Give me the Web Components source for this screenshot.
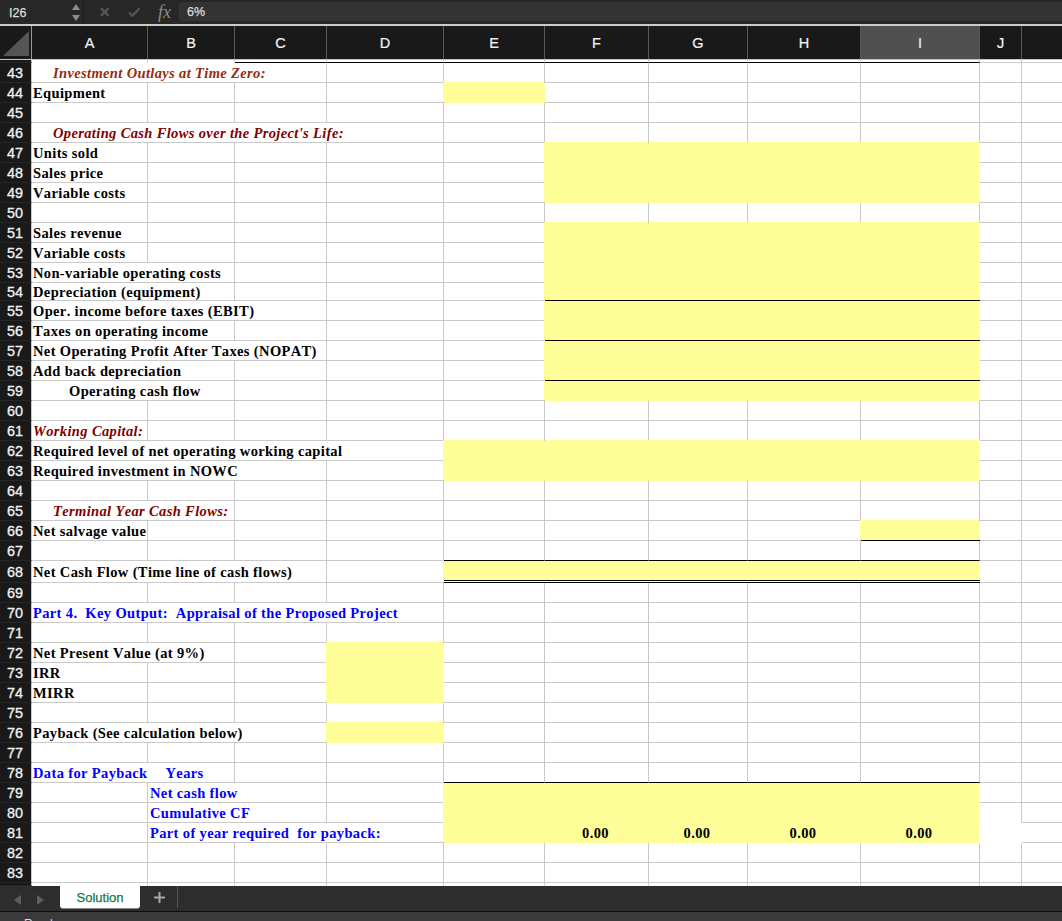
<!DOCTYPE html>
<html>
<head>
<meta charset="utf-8">
<title>Solution</title>
<style>
  html, body { margin: 0; padding: 0; background: #fff; }
  body { width: 1062px; height: 921px; overflow: hidden; font-family: "Liberation Sans", Arial, sans-serif; }
</style>
</head>
<body>
<xl-formula-bar cell="I26" value="6%"></xl-formula-bar>
<xl-sheet></xl-sheet>
<xl-tab-bar active="Solution"></xl-tab-bar>
<xl-status-bar>Ready</xl-status-bar>

<script>
// Formula bar
class XlFormulaBar extends HTMLElement {
  constructor() {
    super();
    this.attachShadow({ mode: 'open' });
  }

  connectedCallback() {
    this.shadowRoot.innerHTML = `
      <style>
        :host {
          display: flex;
          align-items: center;
          height: 26px;
          box-sizing: border-box;
          background: #272727;
          color: #ddd;
          font: 12.5px "Liberation Sans", Arial, sans-serif;
          border-bottom: 2px solid #cbcbcb;
        }
        .name { width: 60px; padding: 1px 0 0 9px; box-sizing: border-box; -webkit-text-stroke: .25px #ddd; }
        .stepper { width: 24px; height: 100%; box-sizing: border-box; border-right: 1px solid #1c1c1c; display: flex; flex-direction: column; justify-content: center; gap: 5px; padding-left: 12px; }
        .stepper svg { display: block; }
        .actions { display: flex; align-items: center; width: 95px; height: 100%; }
        .actions svg { display: block; }
        .fx { font: italic 18px "Liberation Serif", serif; color: #8b8b8b; margin-left: 18px; width: 22px; }
        .input { flex: 1; align-self: stretch; margin: 2px 0 3px; background: #333; border-radius: 3px 0 0 3px; padding-left: 8px; line-height: 20px; -webkit-text-stroke: .25px #ddd; }
      </style>
      <div class="name">${this.getAttribute('cell')}</div>
      <div class="stepper">
        <svg width="8" height="6" viewBox="0 0 8 6"><path d="M4 0 8 6H0z" fill="#8c8c8c"/></svg>
        <svg width="8" height="6" viewBox="0 0 8 6"><path d="M0 0H8L4 6z" fill="#8c8c8c"/></svg>
      </div>
      <div class="actions">
        <svg style="margin-left:16px" width="10" height="10" viewBox="0 0 10 10"><path d="M1 1 9 9M9 1 1 9" stroke="#555" stroke-width="2.4" fill="none"/></svg>
        <svg style="margin-left:18px" width="13" height="10" viewBox="0 0 13 10"><path d="M1 5.5 4.6 9 12 1" stroke="#555" stroke-width="2.4" fill="none"/></svg>
        <span class="fx">fx</span>
      </div>
      <div class="input">${this.getAttribute('value')}</div>
    `;
  }
}

// Worksheet grid
const COLS = [['A', 116], ['B', 87], ['C', 92], ['D', 117], ['E', 101], ['F', 104], ['G', 99], ['H', 113], ['I', 119], ['J', 42], ['K', 40]];
const LETTERS = COLS.map(c => c[0]);

// row: [column, span, text, style class, indent]
const TEXTS = {
  43: ['A', 3, 'Investment Outlays at Time Zero:', 'rust', 20],
  44: ['A', 1, 'Equipment'],
  46: ['A', 4, "Operating Cash Flows over the Project's Life:", 'maroon', 20],
  47: ['A', 1, 'Units sold'],
  48: ['A', 1, 'Sales price'],
  49: ['A', 1, 'Variable costs'],
  51: ['A', 1, 'Sales revenue'],
  52: ['A', 1, 'Variable costs'],
  53: ['A', 2, 'Non-variable operating costs'],
  54: ['A', 2, 'Depreciation (equipment)'],
  55: ['A', 3, 'Oper. income before taxes (EBIT)'],
  56: ['A', 2, 'Taxes on operating income'],
  57: ['A', 3, 'Net Operating Profit After Taxes (NOPAT)'],
  58: ['A', 2, 'Add back depreciation'],
  59: ['A', 2, 'Operating cash flow', '', 36],
  61: ['A', 1, 'Working Capital:', 'maroon'],
  62: ['A', 4, 'Required level of net operating working capital'],
  63: ['A', 3, 'Required investment in NOWC'],
  65: ['A', 2, 'Terminal Year Cash Flows:', 'maroon', 20],
  66: ['A', 1, 'Net salvage value'],
  68: ['A', 3, 'Net Cash Flow (Time line of cash flows)'],
  70: ['A', 4, 'Part 4.  Key Output:  Appraisal of the Proposed Project', 'blue'],
  72: ['A', 2, 'Net Present Value (at 9%)'],
  73: ['A', 1, 'IRR'],
  74: ['A', 1, 'MIRR'],
  76: ['A', 3, 'Payback (See calculation below)'],
  78: ['A', 2, 'Data for Payback', 'blue', 0, 'Years'],
  79: ['B', 2, 'Net cash flow', 'blue', 1],
  80: ['B', 2, 'Cumulative CF', 'blue', 1],
  81: ['B', 3, 'Part of year required  for payback:', 'blue', 1],
};

const FILLS = [
  ['E', 'E', 44, 44], ['F', 'I', 47, 49], ['F', 'I', 51, 59], ['E', 'I', 62, 63],
  ['I', 'I', 66, 66], ['E', 'I', 68, 68], ['D', 'D', 72, 74], ['D', 'D', 76, 76], ['E', 'I', 79, 81],
];

const BLACK = {
  42: ['C', 'I'], 54: ['F', 'I'], 56: ['F', 'I'], 58: ['F', 'I'],
  66: ['I', 'I'], 67: ['E', 'I'], 78: ['E', 'I'],
};

const HEIGHTS = { 54: 18, 68: 22 };
const ZEROS = ['F', 'G', 'H', 'I'];

const inRange = (col, from, to) => {
  const i = LETTERS.indexOf(col);
  return i >= LETTERS.indexOf(from) && i <= LETTERS.indexOf(to);
};

class XlSheet extends HTMLElement {
  constructor() {
    super();
    this.attachShadow({ mode: 'open' });
  }

  connectedCallback() {
    this.render();
  }

  isFilled(col, row) {
    return FILLS.some(f => inRange(col, f[0], f[1]) && row >= f[2] && row <= f[3]);
  }

  cell(col, row) {
    const classes = ['cell'];
    const filled = this.isFilled(col, row);
    if (filled) {
      classes.push('fill');
      const before = LETTERS[LETTERS.indexOf(col) - 1];
      if (!before || !this.isFilled(before, row)) classes.push('edge');
    }
    if (BLACK[row] && inRange(col, BLACK[row][0], BLACK[row][1])) classes.push('black');
    if (row === 68 && filled) classes.push('double');
    if (col === 'K') classes.push('last');
    if (row === 84 || (row === 42 && inRange(col, 'A', 'B'))) classes.push('plain');
    if (row === 80 && col === 'J') classes.push('no-bottom');
    if (row === 81 && col === 'J') classes.push('blank');
    let text = '';
    if (row === 81 && ZEROS.includes(col)) {
      classes.push('zero');
      text = '0.00';
    }
    return `<div class="${classes.join(' ')}">${text}</div>`;
  }

  row(row) {
    const spec = TEXTS[row];
    let html = `<div class="num">${row >= 43 && row <= 83 ? row : ''}</div>`;
    let skip = 0;
    LETTERS.forEach(col => {
      if (skip > 0) { skip--; return; }
      if (spec && spec[0] === col) {
        const [, span, text, cls = '', indent = 0, extra] = spec;
        skip = span - 1;
        html += `<div class="cell label ${cls}" style="grid-column:span ${span};padding-left:${1 + indent}px">${text}${extra ? `<span class="extra">${extra}</span>` : ''}</div>`;
      } else {
        html += this.cell(col, row);
      }
    });
    return html;
  }

  render() {
    const rows = [];
    for (let r = 42; r <= 84; r++) rows.push(r);
    const rowHeights = rows.map(r => r === 42 || r === 84 ? '3px' : (HEIGHTS[r] || 20) + 'px').join(' ');
    this.shadowRoot.innerHTML = `
      <style>
        :host {
          display: block;
          background: #fff;
        }
        .head, .grid {
          display: grid;
          grid-template-columns: 32px ${COLS.map(c => c[1] + 'px').join(' ')};
        }
        .head {
          height: 34px;
          background: #191919;
          border-bottom: 1px solid #c6c6c6;
          box-sizing: border-box;
          color: #f2f2f2;
          font: 14.5px "Liberation Sans", Arial, sans-serif;
        }
        .corner { border-right: 1px solid #9a9a9a; display: flex; align-items: flex-end; padding: 0 0 3px 3px; }
        .col { display: flex; align-items: center; justify-content: center; border-right: 1px solid #5a5a5a; -webkit-text-stroke: .2px #f2f2f2; }
        .col.on { background: #505050; }
        .col:last-child { border-right: 0; }
        .grid {
          grid-template-rows: ${rowHeights};
          font: bold 14.5px "Liberation Serif", "Times New Roman", serif;
          font-kerning: none;
          letter-spacing: .36px;
          color: #000;
        }
        .num {
          background: #191919;
          color: #f2f2f2;
          border-right: 1px solid #c9c9c9;
          border-bottom: 1px solid #262626;
          font: 14.4px "Liberation Sans", Arial, sans-serif;
          letter-spacing: 0;
          -webkit-text-stroke: .3px #f2f2f2;
          display: flex;
          align-items: center;
          justify-content: center;
          padding-right: 1px;
          overflow: hidden;
        }
        .cell {
          border-right: 1px solid #c9c9c9;
          border-bottom: 1px solid #c9c9c9;
          display: flex;
          align-items: center;
          white-space: pre;
          min-width: 0;
        }
        .label, .zero { padding-top: 1px; }
        .last { border-right: 0; }
        .plain { border-bottom-color: transparent; }
        .fill {
          background: #ffff99;
          border-right: 0;
          border-bottom-color: transparent;
          box-shadow: 0 -1px 0 #ffff99;
        }
        .fill.edge { box-shadow: -1px -1px 0 #ffff99; }
        .black { border-bottom-color: #000; z-index: 1; }
        .double { border-bottom: 3px double #000; background-clip: padding-box; }
        .no-bottom { border-bottom-color: #fff; }
        .blank { border-color: #fff; box-shadow: -1px 0 0 #fff; }
        .zero { justify-content: center; padding-right: 3px; }
        .rust { color: #962a0c; font-style: italic; }
        .maroon { color: #800000; font-style: italic; }
        .blue { color: #0000ff; }
        .extra { margin-left: 18px; }
      </style>
      <div class="head">
        <div class="corner"><svg width="26" height="25" viewBox="0 0 26 25"><path d="M26 0V25H0z" fill="#555"/></svg></div>
        ${COLS.map(c => `<div class="col${c[0] === 'I' ? ' on' : ''}">${c[0] === 'K' ? '' : c[0]}</div>`).join('')}
      </div>
      <div class="grid">${rows.map(r => this.row(r)).join('')}</div>
    `;
  }
}

// Sheet tabs along the bottom
class XlTabBar extends HTMLElement {
  constructor() {
    super();
    this.attachShadow({ mode: 'open' });
  }

  connectedCallback() {
    this.shadowRoot.innerHTML = `
      <style>
        :host {
          display: flex;
          height: 26px;
          box-sizing: border-box;
          background: #2d2d2d;
          border-bottom: 1px solid #0e0e0e;
          font: 13px "Liberation Sans", Arial, sans-serif;
        }
        .nav { width: 60px; display: flex; align-items: center; gap: 16px; padding: 2px 0 0 14px; box-sizing: border-box; }
        .tab { width: 80px; height: 22px; background: #fff; border-radius: 0 0 3px 3px; color: #0f7b4f; display: flex; align-items: center; justify-content: center; -webkit-text-stroke: .25px #0f7b4f; box-shadow: 0 1px 0 #888; }
        .add { width: 38px; height: 22px; padding-left: 2px; border-right: 1px solid #555; display: flex; align-items: center; justify-content: center; box-sizing: border-box; }
      </style>
      <div class="nav">
        <svg width="7" height="10" viewBox="0 0 7 10"><path d="M7 0V10L0 5z" fill="#5e5e5e"/></svg>
        <svg width="7" height="10" viewBox="0 0 7 10"><path d="M0 0V10L7 5z" fill="#5e5e5e"/></svg>
      </div>
      <div class="tab">${this.getAttribute('active')}</div>
      <div class="add"><svg width="11" height="11" viewBox="0 0 11 11"><path d="M5.5 0V11M0 5.5H11" stroke="#a8a8a8" stroke-width="2" fill="none"/></svg></div>
    `;
  }
}

// Status bar, cut off by the bottom of the window
class XlStatusBar extends HTMLElement {
  constructor() {
    super();
    this.attachShadow({ mode: 'open' });
  }

  connectedCallback() {
    this.shadowRoot.innerHTML = `
      <style>
        :host {
          display: block;
          height: 9px;
          overflow: hidden;
          background: #3a3a3a;
          color: #ddd;
          font: 12px/14px "Liberation Sans", Arial, sans-serif;
          padding: 5px 0 0 24px;
          box-sizing: border-box;
        }
      </style>
      <slot></slot>
    `;
  }
}

customElements.define('xl-formula-bar', XlFormulaBar);
customElements.define('xl-sheet', XlSheet);
customElements.define('xl-tab-bar', XlTabBar);
customElements.define('xl-status-bar', XlStatusBar);
</script>
</body>
</html>
